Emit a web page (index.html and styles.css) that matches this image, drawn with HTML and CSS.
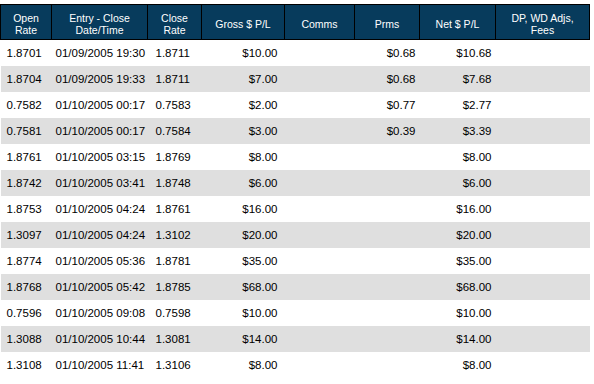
FILE: index.html
```html
<!DOCTYPE html>
<html>
<head>
<meta charset="utf-8">
<link rel="stylesheet" href="styles.css">
</head>
<body>
<div class="caption"></div>
<table class="trades">
  <colgroup>
    <col class="c1"><col class="c2"><col class="c3"><col class="c4"><col class="c5"><col class="c6"><col class="c7"><col class="c8">
  </colgroup>
  <thead>
    <tr>
      <th>Open<br>Rate</th>
      <th>Entry - Close<br>Date/Time</th>
      <th>Close<br>Rate</th>
      <th>Gross $ P/L</th>
      <th>Comms</th>
      <th>Prms</th>
      <th>Net $ P/L</th>
      <th>DP, WD Adjs,<br>Fees</th>
    </tr>
  </thead>
  <tbody>
    <tr><td class="open">1.8701</td><td class="date">01/09/2005 19:30</td><td class="close">1.8711</td><td class="gross">$10.00</td><td></td><td class="prms">$0.68</td><td class="net">$10.68</td><td></td></tr>
    <tr><td class="open">1.8704</td><td class="date">01/09/2005 19:33</td><td class="close">1.8711</td><td class="gross">$7.00</td><td></td><td class="prms">$0.68</td><td class="net">$7.68</td><td></td></tr>
    <tr><td class="open">0.7582</td><td class="date">01/10/2005 00:17</td><td class="close">0.7583</td><td class="gross">$2.00</td><td></td><td class="prms">$0.77</td><td class="net">$2.77</td><td></td></tr>
    <tr><td class="open">0.7581</td><td class="date">01/10/2005 00:17</td><td class="close">0.7584</td><td class="gross">$3.00</td><td></td><td class="prms">$0.39</td><td class="net">$3.39</td><td></td></tr>
    <tr><td class="open">1.8761</td><td class="date">01/10/2005 03:15</td><td class="close">1.8769</td><td class="gross">$8.00</td><td></td><td class="prms"></td><td class="net">$8.00</td><td></td></tr>
    <tr><td class="open">1.8742</td><td class="date">01/10/2005 03:41</td><td class="close">1.8748</td><td class="gross">$6.00</td><td></td><td class="prms"></td><td class="net">$6.00</td><td></td></tr>
    <tr><td class="open">1.8753</td><td class="date">01/10/2005 04:24</td><td class="close">1.8761</td><td class="gross">$16.00</td><td></td><td class="prms"></td><td class="net">$16.00</td><td></td></tr>
    <tr><td class="open">1.3097</td><td class="date">01/10/2005 04:24</td><td class="close">1.3102</td><td class="gross">$20.00</td><td></td><td class="prms"></td><td class="net">$20.00</td><td></td></tr>
    <tr><td class="open">1.8774</td><td class="date">01/10/2005 05:36</td><td class="close">1.8781</td><td class="gross">$35.00</td><td></td><td class="prms"></td><td class="net">$35.00</td><td></td></tr>
    <tr><td class="open">1.8768</td><td class="date">01/10/2005 05:42</td><td class="close">1.8785</td><td class="gross">$68.00</td><td></td><td class="prms"></td><td class="net">$68.00</td><td></td></tr>
    <tr><td class="open">0.7596</td><td class="date">01/10/2005 09:08</td><td class="close">0.7598</td><td class="gross">$10.00</td><td></td><td class="prms"></td><td class="net">$10.00</td><td></td></tr>
    <tr><td class="open">1.3088</td><td class="date">01/10/2005 10:44</td><td class="close">1.3081</td><td class="gross">$14.00</td><td></td><td class="prms"></td><td class="net">$14.00</td><td></td></tr>
    <tr><td class="open">1.3108</td><td class="date">01/10/2005 11:41</td><td class="close">1.3106</td><td class="gross">$8.00</td><td></td><td class="prms"></td><td class="net">$8.00</td><td></td></tr>
  </tbody>
</table>
</body>
</html>
```
FILE: styles.css
```css
html, body {
  margin: 0;
  padding: 0;
  background: #ffffff;
}
body {
  font-family: "Liberation Sans", Arial, sans-serif;
  color: #000;
}
.caption {
  height: 4px;
}
.trades {
  border-collapse: collapse;
  table-layout: fixed;
  width: 589px;
}
.c1 { width: 51px; }
.c2 { width: 96px; }
.c3 { width: 54px; }
.c4 { width: 83px; }
.c5 { width: 70px; }
.c6 { width: 65px; }
.c7 { width: 76px; }
.c8 { width: 94px; }
.trades th {
  background: #073b5c;
  color: #ffffff;
  font-weight: normal;
  font-size: 10.5px;
  line-height: 12px;
  height: 31px;
  padding: 3px 2px 0;
  border: 1px solid #000;
  text-align: center;
  vertical-align: middle;
}
.trades td {
  height: 26px;
  padding: 1px 0 0;
  box-sizing: border-box;
  font-size: 11.5px;
  vertical-align: middle;
  white-space: nowrap;
}
.trades tbody tr:nth-child(even) td {
  background: #dfdfdf;
}
.open { padding-left: 6px !important; }
.date { padding-left: 4px !important; }
.close { padding-left: 8px !important; }
.gross { text-align: right; padding-right: 7px !important; }
.prms { text-align: right; padding-right: 4px !important; }
.net { text-align: right; padding-right: 4px !important; }
```
